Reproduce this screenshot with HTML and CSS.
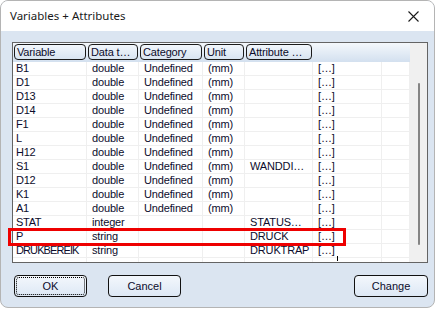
FILE: index.html
```html
<!DOCTYPE html>
<html>
<head>
<meta charset="utf-8">
<link rel="stylesheet" href="styles.css">
</head>
<body>
<div class="window">
  <div class="titlebar">
    <span class="title">Variables + Attributes</span>
    <svg class="close" width="11" height="11" viewBox="0 0 11 11"><path d="M0.5 0.5 L10.5 10.5 M10.5 0.5 L0.5 10.5" stroke="#1a1a1a" stroke-width="1.1" fill="none"/></svg>
  </div>
  <div class="content">
    <div class="list">
      <div class="table">
        <div class="hcell"><span class="hbox">Variable</span></div>
        <div class="hcell"><span class="hbox">Data t…</span></div>
        <div class="hcell"><span class="hbox">Category</span></div>
        <div class="hcell"><span class="hbox">Unit</span></div>
        <div class="hcell"><span class="hbox">Attribute …</span></div>
        <div class="hcell"></div>
        <div class="hcell"></div>

        <div class="c first">B1</div><div class="c">double</div><div class="c">Undefined</div><div class="c">(mm)</div><div class="c"></div><div class="c">[…]</div><div class="c"></div>
        <div class="c first">D1</div><div class="c">double</div><div class="c">Undefined</div><div class="c">(mm)</div><div class="c"></div><div class="c">[…]</div><div class="c"></div>
        <div class="c first">D13</div><div class="c">double</div><div class="c">Undefined</div><div class="c">(mm)</div><div class="c"></div><div class="c">[…]</div><div class="c"></div>
        <div class="c first">D14</div><div class="c">double</div><div class="c">Undefined</div><div class="c">(mm)</div><div class="c"></div><div class="c">[…]</div><div class="c"></div>
        <div class="c first">F1</div><div class="c">double</div><div class="c">Undefined</div><div class="c">(mm)</div><div class="c"></div><div class="c">[…]</div><div class="c"></div>
        <div class="c first">L</div><div class="c">double</div><div class="c">Undefined</div><div class="c">(mm)</div><div class="c"></div><div class="c">[…]</div><div class="c"></div>
        <div class="c first">H12</div><div class="c">double</div><div class="c">Undefined</div><div class="c">(mm)</div><div class="c"></div><div class="c">[…]</div><div class="c"></div>
        <div class="c first">S1</div><div class="c">double</div><div class="c">Undefined</div><div class="c">(mm)</div><div class="c">WANDDI…</div><div class="c">[…]</div><div class="c"></div>
        <div class="c first">D12</div><div class="c">double</div><div class="c">Undefined</div><div class="c">(mm)</div><div class="c"></div><div class="c">[…]</div><div class="c"></div>
        <div class="c first">K1</div><div class="c">double</div><div class="c">Undefined</div><div class="c">(mm)</div><div class="c"></div><div class="c">[…]</div><div class="c"></div>
        <div class="c first">A1</div><div class="c">double</div><div class="c">Undefined</div><div class="c">(mm)</div><div class="c"></div><div class="c">[…]</div><div class="c"></div>
        <div class="c first">STAT</div><div class="c">integer</div><div class="c"></div><div class="c"></div><div class="c">STATUS…</div><div class="c">[…]</div><div class="c"></div>
        <div class="c first">P</div><div class="c">string</div><div class="c"></div><div class="c"></div><div class="c">DRUCK</div><div class="c">[…]</div><div class="c"></div>
        <div class="c first long">DRUKBEREIK</div><div class="c">string</div><div class="c"></div><div class="c"></div><div class="c">DRUKTRAP</div><div class="c caret-cell">[…]<span class="caret"></span></div><div class="c"></div>

        <div class="f"></div><div class="f"></div><div class="f"></div><div class="f"></div><div class="f"></div><div class="f"></div><div class="f"></div>
      </div>
      <div class="scrollbar"><div class="thumb"></div></div>
      <div class="highlight"></div>
    </div>
    <div class="buttons">
      <button class="btn default"><span class="focus">OK</span></button>
      <button class="btn">Cancel</button>
      <button class="btn right">Change</button>
    </div>
  </div>
</div>
</body>
</html>
```
FILE: styles.css
```css
html, body {
  margin: 0;
  padding: 0;
  background: #ffffff;
}
body {
  width: 439px;
  height: 310px;
  overflow: hidden;
}
.window {
  box-sizing: border-box;
  width: 435px;
  height: 308px;
  border: 1px solid #b4b4b4;
  border-radius: 8px;
  overflow: hidden;
  background: #dbe5f1;
  display: flex;
  flex-direction: column;
}
.titlebar {
  height: 30px;
  background: #ffffff;
  display: flex;
  align-items: center;
  justify-content: space-between;
  padding: 0 15px 0 9px;
  flex: none;
}
.title {
  font-family: "Noto Sans", sans-serif;
  font-size: 11.5px;
  color: #1a1a1a;
  margin-top: -1px;
}
.content {
  padding: 11px 6px 0 11px;
  display: flex;
  flex-direction: column;
}
.list {
  position: relative;
  box-sizing: border-box;
  width: 416px;
  height: 221px;
  border: 1px solid #646464;
  background: #ffffff;
  display: flex;
}
.table {
  width: 397px;
  display: grid;
  grid-template-columns: 74px 52px 64px 42px 68px 69px 28px;
  grid-template-rows: 19px repeat(14, 14px) 1fr;
  font-family: "Liberation Sans", Arial, sans-serif;
  font-size: 11px;
  letter-spacing: -0.15px;
  color: #0c0c2c;
}
.hcell {
  background: linear-gradient(#f4f8fc, #d3e0ef);
  display: flex;
  padding: 1px 1px 2px 1px;
}
.hbox {
  box-sizing: border-box;
  flex: 1;
  border: 1px solid #1a1a1a;
  border-radius: 4px;
  padding-left: 2px;
  line-height: 14px;
  white-space: nowrap;
  overflow: hidden;
}
.c {
  box-sizing: border-box;
  border-right: 1px solid #efefef;
  border-bottom: 1px solid #efefef;
  padding-left: 5px;
  line-height: 13px;
  white-space: nowrap;
  overflow: hidden;
}
.c.first {
  padding-left: 3px;
  letter-spacing: -0.3px;
}
.c.long {
  letter-spacing: -0.9px;
}
.caret-cell {
  position: relative;
  overflow: visible;
}
.caret {
  position: absolute;
  left: 24px;
  top: 12px;
  width: 1px;
  height: 5px;
  background: #000;
}
.f {
  border-right: 1px solid #efefef;
}
.scrollbar {
  width: 17px;
  background: #f0f0f0;
}
.thumb {
  width: 2px;
  height: 162px;
  margin: 40px 0 0 8px;
  background: #858585;
  border-radius: 1px;
}
.highlight {
  position: absolute;
  left: -5px;
  top: 185px;
  width: 338px;
  height: 18px;
  box-sizing: border-box;
  border: 3px solid #ee0000;
}
.buttons {
  display: flex;
  margin-top: 12px;
  padding-left: 2px;
  gap: 21px;
}
.btn {
  box-sizing: border-box;
  width: 73px;
  height: 22px;
  border: 1px solid #111;
  border-radius: 4px;
  background: linear-gradient(#f3f7fc, #dde8f5);
  font-family: "Liberation Sans", Arial, sans-serif;
  font-size: 11px;
  color: #0c0c2c;
  padding: 0;
  display: flex;
  align-items: center;
  justify-content: center;
}
.btn.default {
  padding: 1px;
}
.focus {
  box-sizing: border-box;
  width: 100%;
  height: 100%;
  border: 1px dotted #000;
  border-radius: 3px;
  display: flex;
  align-items: center;
  justify-content: center;
}
.btn.right {
  margin-left: auto;
  width: 74px;
}
```
